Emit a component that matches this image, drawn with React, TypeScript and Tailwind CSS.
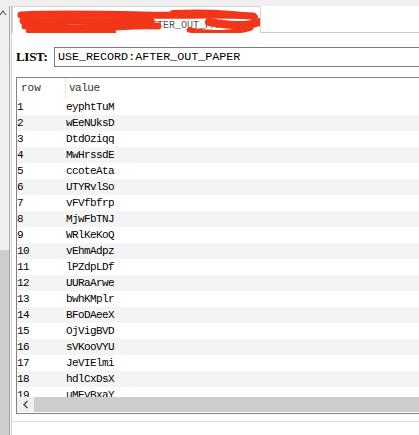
const ROWS: [number, string][] = [
  [1, "eyphtTuM"],
  [2, "wEeNUksD"],
  [3, "DtdOziqq"],
  [4, "MwHrssdE"],
  [5, "ccoteAta"],
  [6, "UTYRvlSo"],
  [7, "vFVfbfrp"],
  [8, "MjwFbTNJ"],
  [9, "WRlKeKoQ"],
  [10, "vEhmAdpz"],
  [11, "lPZdpLDf"],
  [12, "UURaArwe"],
  [13, "bwhKMplr"],
  [14, "BFoDAeeX"],
  [15, "OjVigBVD"],
  [16, "sVKooVYU"],
  [17, "JeVIElmi"],
  [18, "hdlCxDsX"],
  [19, "uMEvBxaY"],
];

const mono = "font-['Liberation_Mono','DejaVu_Sans_Mono',monospace]";

function Scribble() {
  // red marker strokes hiding the tab title
  return (
    <svg className="absolute left-0 top-0 pointer-events-none" width="250" height="28" viewBox="0 0 250 28">
      <g fill="none" stroke="#f2361a" strokeLinecap="round" strokeLinejoin="round">
        <path d="M8 8 C40 6 90 7 130 8 S200 7 240 9" strokeWidth="7" />
        <path d="M10 14 C50 13 100 14 138 14" strokeWidth="7" />
        <path d="M12 19 C40 21 70 21 100 20 S125 18 145 19" strokeWidth="7" />
        <path d="M16 24 C40 26 70 26 100 25" strokeWidth="6" />
        <path d="M160 6 C185 5 215 5 242 10" strokeWidth="6" />
        <path d="M196 15 C214 18 230 20 246 15" strokeWidth="8" />
        <path d="M176 23 C198 27 222 26 238 21" strokeWidth="5" />
      </g>
    </svg>
  );
}

export default function App() {
  return (
    <div className="w-[419px] h-[435px] overflow-hidden bg-white flex">
      {/* left gutter */}
      <div className="w-[9px] shrink-0 flex flex-col">
        <div className="h-[250px] bg-[#f0f0f0] relative">
          <svg className="absolute left-0 top-[9px]" width="8" height="8" viewBox="0 0 8 8">
            <path d="M0 6 L3 2 L6 6" fill="none" stroke="#606060" strokeWidth="1.2" />
          </svg>
        </div>
        <div className="flex-1 bg-[#cdcdcd]" />
      </div>
      <div className="w-[3px] shrink-0 border-l border-r border-l-[#a9a9a9] border-r-[#c4c4c4] bg-[#f4f4f4]" />

      {/* main */}
      <div className="flex-1 min-w-0 flex flex-col">
        <div className="h-[6px] bg-[#f0f0f0] -ml-[3px]" />
        <div className="flex h-[27px]">
          <div className="w-[249px] shrink-0 border border-b-0 border-[#d4d4d4] bg-white relative overflow-hidden">
            <div className={`${mono} text-[10px] text-[#555] pt-[11px] pl-[48px] whitespace-nowrap`}>
              ND:USE_RECORD:AFTER_OUT_PAPER
            </div>
            <Scribble />
          </div>
          <div className="flex-1 border-b border-[#c8c8c8]" />
        </div>

        <div className="flex-1 flex flex-col pl-[4px] border-l border-[#d4d4d4] -ml-px">
          <div className="flex items-center mt-[14px] h-[19px]">
            <span className="font-['Liberation_Serif',serif] font-bold text-[13px] text-black w-[38px] shrink-0 tracking-[-0.3px]">
              LIST:
            </span>
            <div className={`${mono} h-[20px] flex-1 border border-[#7a7a7a] border-r-0 text-[11.7px] text-black pl-[3px] leading-[18px] whitespace-nowrap`}>
              USE_RECORD:AFTER_OUT_PAPER
            </div>
          </div>

          {/* table */}
          <div className="mt-[11px] w-[420px] border border-r-0 border-[#828282] flex flex-col">
            <div className={`${mono} h-[21px] flex items-center text-[11px] text-[#333] bg-white`}>
              <div className="w-[49px] pl-[4px] h-full flex items-center border-r border-[#e5e5e5]">row</div>
              <div className="pl-[3px] tracking-[-0.5px]">value</div>
            </div>
            <div className="h-[298px] overflow-hidden">
              {ROWS.map(([n, v]) => (
                <div
                  key={n}
                  className={`h-[16px] flex items-center text-[11px] text-black ${n % 2 === 0 ? "bg-[#f4f4f4]" : "bg-white"}`}
                >
                  <div className={`${mono} w-[49px] tracking-[-0.6px]`}>{n}</div>
                  <div className={`${mono} tracking-[-0.6px]`}>{v}</div>
                </div>
              ))}
            </div>
            <div className="h-[16px] flex bg-[#cdcdcd] border-b border-white">
              <div className="w-[17px] bg-[#f0f0f0] flex items-center justify-center">
                <svg width="8" height="9" viewBox="0 0 8 9">
                  <path d="M5.5 1 L2 4.5 L5.5 8" fill="none" stroke="#555" strokeWidth="1.6" />
                </svg>
              </div>
            </div>
          </div>
          <div className="h-[7px]" />
          <div className="h-px bg-[#e2e2e2] -ml-[4px]" />
          <div className="flex-1 bg-white" />
        </div>
      </div>
    </div>
  );
}
